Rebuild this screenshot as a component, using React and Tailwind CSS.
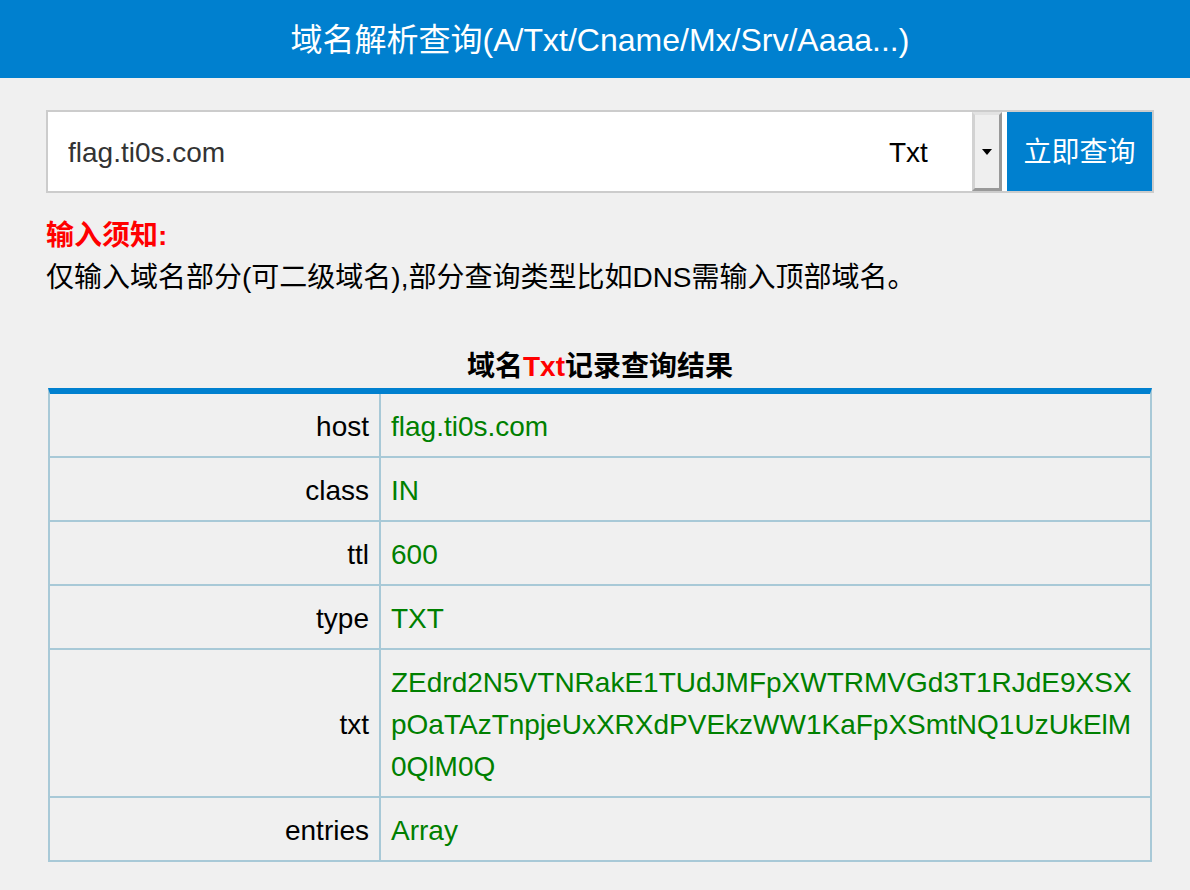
import React from "react";

const rows = [
  { k: "host", v: "flag.ti0s.com" },
  { k: "class", v: "IN" },
  { k: "ttl", v: "600" },
  { k: "type", v: "TXT" },
  { k: "txt", v: "ZEdrd2N5VTNRakE1TUdJMFpXWTRMVGd3T1RJdE9XSXpOaTAzTnpjeUxXRXdPVEkzWW1KaFpXSmtNQ1UzUkElM0QlM0Q" },
  { k: "entries", v: "Array" },
];

export default function App() {
  return (
    <div className="min-h-screen bg-[#f0f0f0] font-['Liberation_Sans','Noto_Sans_CJK_SC',sans-serif] text-[28px]">
      <header className="h-[78px] bg-[#0080cf] text-white text-[32px] flex items-center justify-center pl-[10px] pt-[2px]">
        域名解析查询(A/Txt/Cname/Mx/Srv/Aaaa...)
      </header>

      <main className="pl-[46px] pr-[36px] pt-[32px] pb-[28px]">
        {/* search bar */}
        <form className="flex h-[83px] border-2 border-[#cccccc] bg-white" onSubmit={(e) => e.preventDefault()}>
          <input
            className="flex-1 min-w-0 pl-[20px] pt-[3px] text-[#333] outline-none bg-white"
            defaultValue="flag.ti0s.com"
          />
          <div className="flex w-[143px]">
            <span className="flex-1 flex items-center pl-[30px] pt-[3px] text-black">Txt</span>
            <div className="w-[30px] flex items-center justify-center bg-[#efefef] border-[3px] border-t-[#e2e2e2] border-l-[#d2d2d2] border-r-[#999999] border-b-[#999999]">
              <span className="w-0 h-0 border-x-[5px] border-x-transparent border-t-[6px] border-t-black" />
            </div>
          </div>
          <button className="ml-[5px] w-[145px] pt-[3px] bg-[#0080cf] text-white">立即查询</button>
        </form>

        {/* notice */}
        <div className="mt-[22px] leading-[42px]">
          <p className="font-bold text-[#ff0000]">输入须知:</p>
          <p className="text-black">仅输入域名部分(可二级域名),部分查询类型比如DNS需输入顶部域名。</p>
        </div>

        {/* result */}
        <h2 className="mt-[47px] leading-[42px] text-center font-bold text-black">
          域名<span className="text-[#ff0000]">Txt</span>记录查询结果
        </h2>
        <div className="mx-[2px] border-2 border-[#a8c9d7] border-t-[6px] border-t-[#0080cf]">
          {rows.map((r, i) => (
            <div key={r.k} className={i ? "flex border-t-2 border-[#a8c9d7]" : "flex"}>
              <div className="w-[331px] shrink-0 border-r-2 border-[#a8c9d7] pt-[12px] pb-[8px] pr-[10px] leading-[42px] text-right text-black flex items-center justify-end">
                {r.k}
              </div>
              <div className="flex-1 min-w-0 pt-[12px] pb-[8px] px-[10px] leading-[42px] text-[#008000] break-all">
                {r.v}
              </div>
            </div>
          ))}
        </div>
      </main>
    </div>
  );
}
